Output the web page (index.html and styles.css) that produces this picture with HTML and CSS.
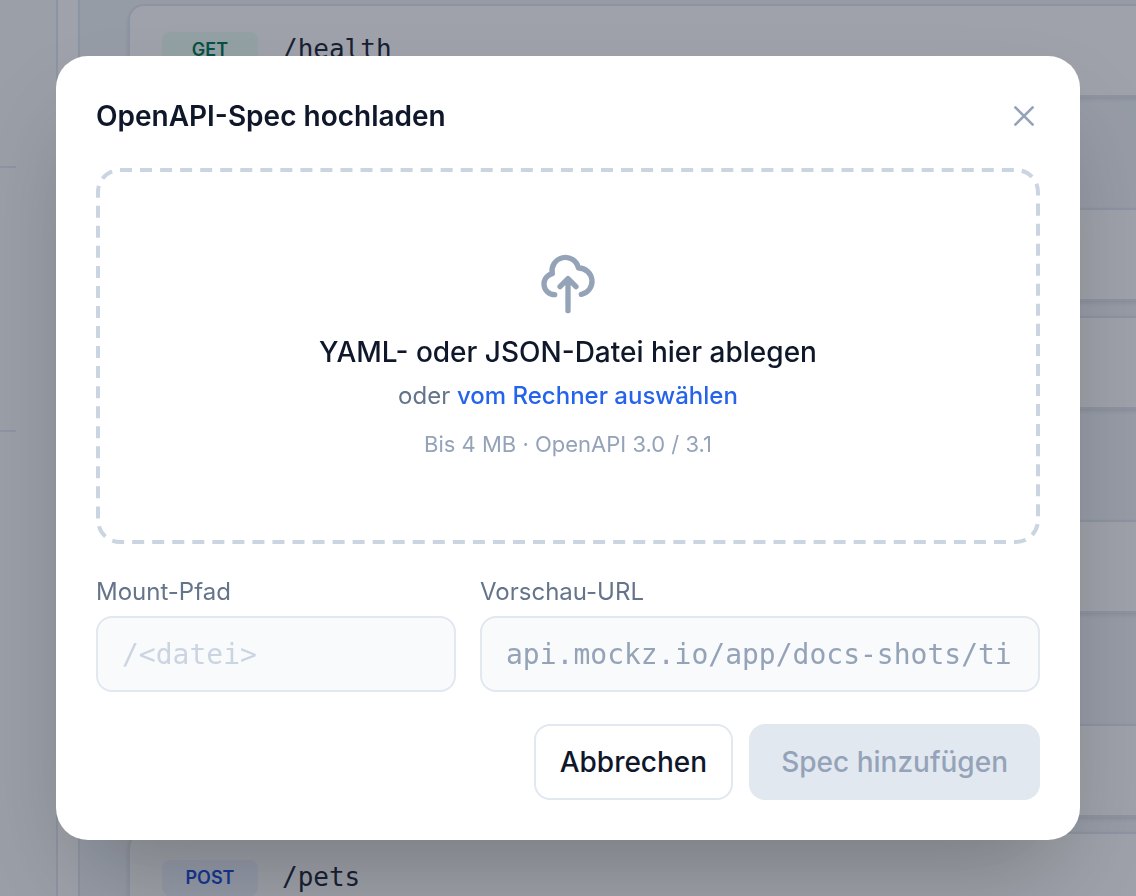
FILE: index.html
```
<!DOCTYPE html>
<html lang="de">
<head>
    <meta charset="UTF-8">
    <meta name="viewport" content="width=device-width, initial-scale=1.0">
    <title>OpenAPI-Spec hochladen</title>
    <link rel="stylesheet" href="styles.css">
</head>
<body>
    <div class="app">
        <aside class="sidebar">
            <div class="sidebar-group first"></div>
            <div class="sidebar-group"></div>
        </aside>
        <div class="divider"></div>
        <main class="routes">
            <section class="group">
                <div class="route"><span class="method get">GET</span><span class="path">/health</span></div>
            </section>
            <section class="group">
                <div class="route"></div>
                <div class="route"></div>
            </section>
            <section class="group">
                <div class="route"></div>
            </section>
            <section class="group">
                <div class="route"></div>
                <div class="route"><span class="method post">POST</span><span class="path">/pets</span></div>
            </section>
        </main>
    </div>

    <div class="overlay">
        <form class="modal" role="dialog" aria-modal="true" aria-labelledby="modal-title">
            <div class="modal-header">
                <h2 id="modal-title">OpenAPI-Spec hochladen</h2>
                <button type="button" class="close" aria-label="Schließen">
                    <svg viewBox="0 0 24 24" fill="none" stroke="currentColor" stroke-width="2" stroke-linecap="round">
                        <path d="M5.5 5.5l13 13M18.5 5.5l-13 13"/>
                    </svg>
                </button>
            </div>

            <div class="dropzone">
                <svg class="outline" aria-hidden="true">
                    <rect x="2" y="2" rx="22" pathLength="2580"/>
                </svg>
                <svg class="cloud" viewBox="0 0 24 24" fill="none" stroke="currentColor" stroke-width="2" stroke-linecap="round" stroke-linejoin="round">
                    <path d="M7 16a4 4 0 01-.88-7.903A5 5 0 1115.9 6L16 6a5 5 0 011 9.9M15 13l-3-3m0 0l-3 3m3-3v12"/>
                </svg>
                <p class="drop-title">YAML- oder JSON-Datei hier ablegen</p>
                <p class="drop-sub">oder <a href="#">vom Rechner auswählen</a></p>
                <p class="drop-hint">Bis 4 MB · OpenAPI 3.0 / 3.1</p>
            </div>

            <div class="fields">
                <div class="field">
                    <label for="mount">Mount-Pfad</label>
                    <input type="text" id="mount" placeholder="/&lt;datei&gt;">
                </div>
                <div class="field">
                    <label for="preview">Vorschau-URL</label>
                    <input type="text" id="preview" value="api.mockz.io/app/docs-shots/tic" readonly>
                </div>
            </div>

            <div class="actions">
                <button type="button" class="btn">Abbrechen</button>
                <button type="submit" class="btn btn-primary" disabled>Spec hinzufügen</button>
            </div>
        </form>
    </div>
</body>
</html>
```
FILE: styles.css
```
* {
    box-sizing: border-box;
}
body {
    margin: 0;
    font-family: Inter, sans-serif;
    color: #0f172a;
    background-color: #f1f5f9;
}
h2, p {
    margin: 0;
}

/* page behind the dialog */
.app {
    display: flex;
    height: 100vh;
    overflow: hidden;
}
.sidebar {
    flex: 0 0 56px;
    padding-right: 40px;
    background-color: #f8fafc;
}
.sidebar-group {
    height: 264px;
    border-bottom: 2px solid #e2e8f0;
}
.sidebar-group.first {
    height: 168px;
}
.divider {
    flex: 0 0 24px;
    background-color: white;
    border: solid #e2e8f0;
    border-width: 0 2px;
}
.routes {
    flex: 1;
    display: flex;
    flex-direction: column;
    gap: 111px;
    padding: 4px 0 0 48px;
    margin-right: -40px;
}
.group {
    display: flex;
    flex-direction: column;
    gap: 15px;
}
.route {
    flex: none;
    display: flex;
    align-items: flex-start;
    gap: 24px;
    height: 93px;
    padding: 26px 32px;
    background-color: white;
    border: 2px solid #e2e8f0;
    border-radius: 16px;
    box-shadow: 0 2px 4px rgba(15, 23, 42, 0.1);
}
.method {
    width: 96px;
    border-radius: 8px;
    font-size: 18px;
    font-weight: 600;
    line-height: 36px;
    text-align: center;
}
.get {
    color: #047857;
    background-color: #ecfdf5;
}
.post {
    color: #1d4ed8;
    background-color: #eff6ff;
}
.path {
    font-family: "DejaVu Sans Mono", monospace;
    font-size: 26px;
    line-height: 34px;
    color: #1e293b;
}

/* dialog */
.overlay {
    position: fixed;
    inset: 0;
    display: flex;
    align-items: center;
    justify-content: center;
    padding: 56px;
    background-color: rgba(15, 23, 42, 0.4);
}
.modal {
    width: 100%;
    max-width: 1024px;
    padding: 40px;
    background-color: white;
    border-radius: 32px;
    box-shadow: 0 50px 100px -24px rgba(0, 0, 0, 0.25);
}
.modal-header {
    display: flex;
    align-items: center;
    justify-content: space-between;
    margin-bottom: 32px;
}
.modal-header h2 {
    font-size: 28px;
    font-weight: 600;
    line-height: 40px;
}
.close {
    display: flex;
    padding: 4px 0;
    border: none;
    background: none;
    color: #94a3b8;
    cursor: pointer;
}
.close svg {
    width: 32px;
    height: 32px;
}
.dropzone {
    position: relative;
    display: flex;
    flex-direction: column;
    align-items: center;
    padding: 84px 28px;
    text-align: center;
}
/* dashed frame, drawn in svg to control the dash length */
.outline {
    position: absolute;
    inset: 0;
    width: 100%;
    height: 100%;
    pointer-events: none;
}
.outline rect {
    width: calc(100% - 4px);
    height: calc(100% - 4px);
    fill: none;
    stroke: #cbd5e1;
    stroke-width: 4px;
    stroke-dasharray: 12 8;
}
.cloud {
    width: 64px;
    height: 64px;
    margin-bottom: 16px;
    color: #94a3b8;
}
.drop-title {
    margin-bottom: 8px;
    font-size: 28px;
    font-weight: 500;
    line-height: 40px;
}
.drop-sub {
    margin-bottom: 16px;
    font-size: 24px;
    line-height: 32px;
    color: #64748b;
}
.drop-sub a {
    color: #2563eb;
    font-weight: 500;
    text-decoration: none;
}
.drop-hint {
    font-size: 22px;
    line-height: 32px;
    color: #94a3b8;
}
.fields {
    display: grid;
    grid-template-columns: 9fr 14fr;
    gap: 24px;
    margin: 32px 0;
}
.field label {
    display: block;
    margin-bottom: 8px;
    font-size: 24px;
    line-height: 32px;
    color: #64748b;
}
.field input {
    display: block;
    width: 100%;
    height: 76px;
    padding: 0 24px;
    border: 2px solid #e2e8f0;
    border-radius: 16px;
    background-color: #f8fafc;
    color: #94a3b8;
    font-family: "DejaVu Sans Mono", monospace;
    font-size: 28px;
}
.field input::placeholder {
    color: #cbd5e1;
}
.actions {
    display: flex;
    justify-content: flex-end;
    gap: 16px;
}
.btn {
    height: 76px;
    padding: 0 24px;
    border: 2px solid #e2e8f0;
    border-radius: 16px;
    background-color: white;
    color: #0f172a;
    font-family: inherit;
    font-size: 28px;
    font-weight: 500;
}
.btn-primary {
    padding: 0 32px;
    border: none;
    background-color: #e2e8f0;
    color: #94a3b8;
}
```
